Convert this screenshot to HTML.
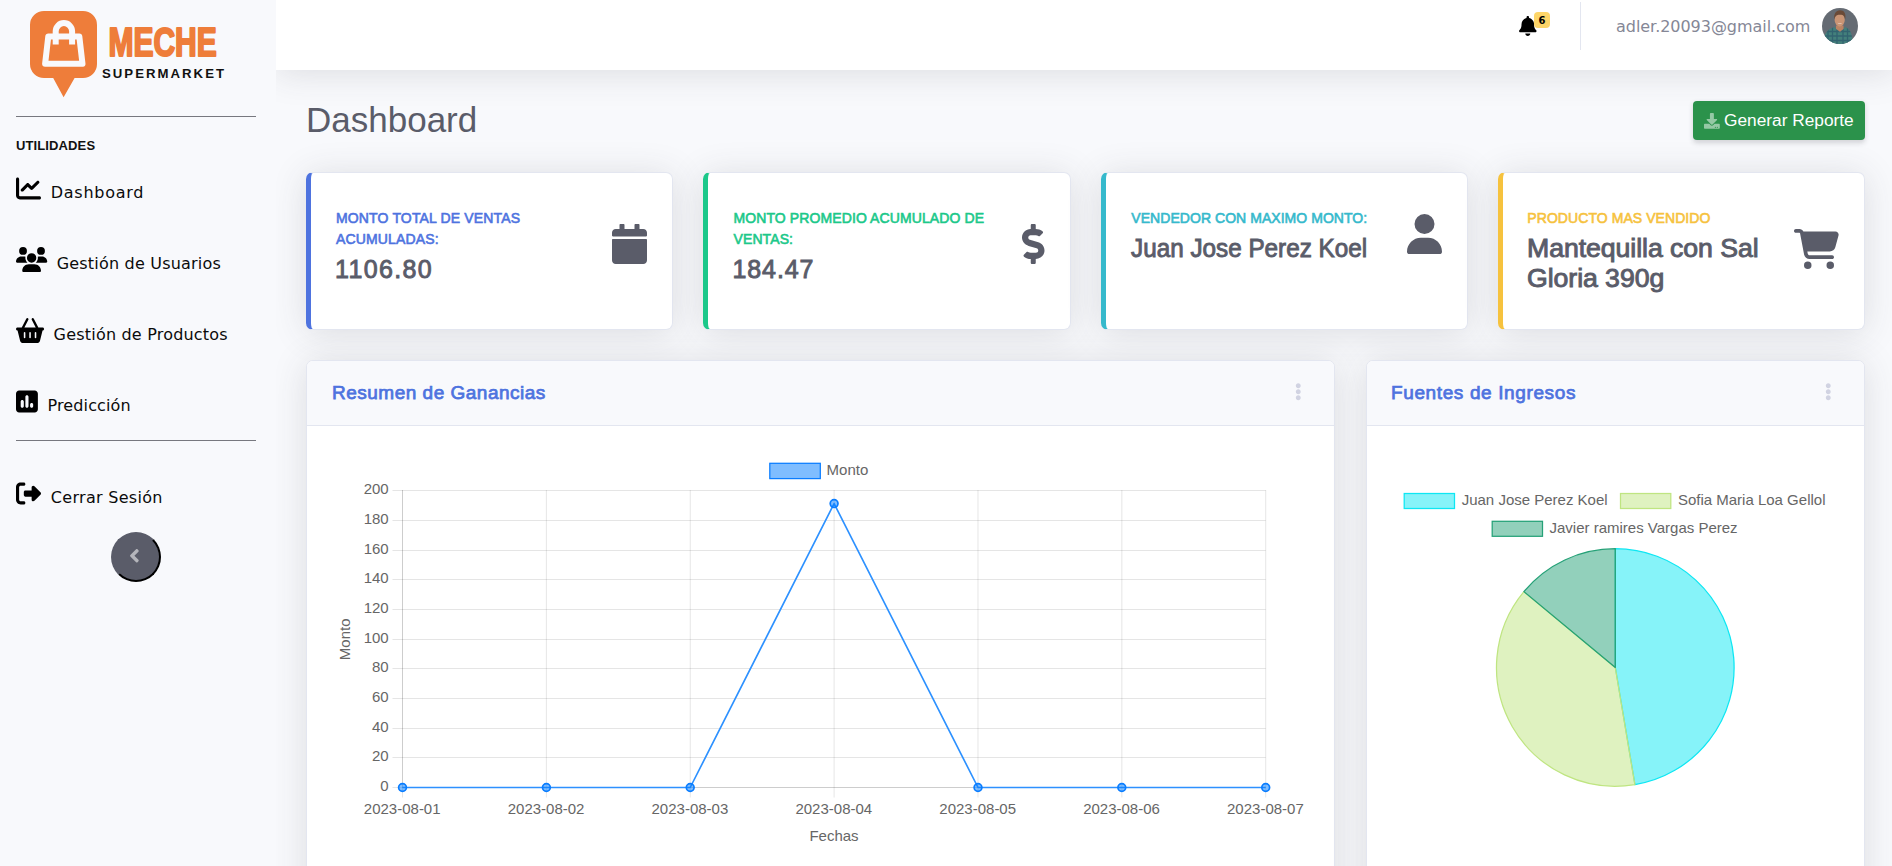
<!DOCTYPE html>
<html lang="es">
<head>
<meta charset="utf-8">
<title>Meche Supermarket - Dashboard</title>
<style>
*{box-sizing:border-box}
html,body{margin:0;padding:0}
body{width:1892px;height:866px;overflow:hidden;position:relative;background:#f8f9fc;font-family:"Liberation Sans",sans-serif;color:#5a5c69}
.abs{position:absolute}
svg{display:block;overflow:visible}
/* sidebar */
#sidebar{position:absolute;left:0;top:0;width:276px;height:866px;background:#f8f9fc;z-index:3}
#sidebar hr{position:absolute;left:16px;width:240px;height:1px;border:0;margin:0;background:#77787f}
#sidebar .heading{position:absolute;left:16px;top:136px;font-weight:700;font-size:13px;line-height:20px;color:#111;letter-spacing:.12px}
#sidebar ul{list-style:none;margin:0;padding:0}
#sidebar li{position:absolute;left:16px;height:30px}
#sidebar li svg{position:absolute;left:0;top:0;fill:#000}
#sidebar li span{position:absolute;white-space:nowrap;font-family:"DejaVu Sans","Liberation Sans",sans-serif;font-size:16px;line-height:20px;color:#0b0b0b;letter-spacing:.2px}
#toggle{position:absolute;left:111px;top:532px;width:50px;height:50px;border-radius:50%;background:#5a5c69;border:2px solid;border-color:#5a5c69 #000 #000 #5a5c69;padding:0}
#toggle svg{position:absolute;left:16.4px;top:11.3px;fill:rgba(255,255,255,.55)}
/* topbar */
#wrap{position:absolute;left:276px;top:0;width:1616px;height:866px;overflow:hidden}
#topbar{position:absolute;left:0;top:0;width:1618px;height:70px;background:#fff;box-shadow:0 3px 35px 0 rgba(58,59,69,.15);z-index:2}
#topbar .divider{position:absolute;left:1304px;top:2px;width:1px;height:48px;background:#e3e6f0}
#topbar .badge{position:absolute;left:1258px;top:12px;width:16px;height:16px;border-radius:4px;background:#fdd568;color:#000;font-family:"DejaVu Sans","Liberation Sans",sans-serif;font-weight:700;font-size:10px;line-height:17.5px;text-align:center}
#topbar .email{position:absolute;left:1340px;top:16.8px;letter-spacing:-.04px;font-family:"DejaVu Sans","Liberation Sans",sans-serif;font-size:16px;line-height:20px;color:#858796;white-space:nowrap}
/* content */
h1{position:absolute;margin:0;font-weight:400;font-size:35px;line-height:40px;color:#5a5c69;left:30px;top:100px;white-space:nowrap}
#btn{position:absolute;left:1417px;top:101px;width:172px;height:39px;border-radius:4px;background:#2b924b;box-shadow:0 2.5px 5px 0 rgba(58,59,69,.2);color:#fff;font-size:17.3px;line-height:20px}
#btn span{position:absolute;left:31px;top:9px;white-space:nowrap}
#btn svg{position:absolute;left:10.5px;top:11.5px;fill:rgba(255,255,255,.5)}
.card{position:absolute;background:#fff;border:1px solid #e3e6f0;border-radius:7px;box-shadow:0 3px 35px 0 rgba(58,59,69,.15)}
.stat{top:172px;width:367px;height:158px;border-left-width:5px;border-left-style:solid}
.stat .lbl{position:absolute;left:25.5px;top:35px;font-size:14px;font-weight:400;-webkit-text-stroke:.6px currentColor;line-height:21px;text-transform:uppercase;white-space:nowrap}
.stat .val{position:absolute;left:26px;font-size:25px;font-weight:400;-webkit-text-stroke:.9px currentColor;line-height:30px;color:#5a5c69;white-space:nowrap}
.stat svg{position:absolute;fill:#5a5c69}
.big .hd{position:absolute;left:0;top:0;right:0;height:65px;background:#f8f9fc;border-bottom:1px solid #e3e6f0;border-radius:6px 6px 0 0}
.big .hd h6{position:absolute;left:25px;top:20px;margin:0;font-size:19px;font-weight:400;-webkit-text-stroke:.75px currentColor;line-height:24px;color:#4e73df;white-space:nowrap}
.big .hd svg{position:absolute;fill:#d1d3e2}
</style>
</head>
<body>
<nav id="sidebar">
<a id="logo" style="position:absolute;left:0;top:0;width:276px;height:110px;display:block">
<svg width="276" height="110" viewBox="0 0 276 110">
<path fill="#ee7d3a" d="M44 11H83a14 14 0 0 1 14 14V64a14 14 0 0 1 -14 14H74.600L63.600 97.300 53.200 78H44a14 14 0 0 1 -14 -14V25a14 14 0 0 1 14 -14z"/>
<path fill="none" stroke="#f8f9fc" stroke-width="6" d="M55.700 44.500V31.300a8.200 8.200 0 0 1 16.400 0V44.500"/>
<path fill="none" stroke="#f8f9fc" stroke-width="6" stroke-linejoin="round" d="M48.300 36.400H79.300L82.500 63.800H45.100z"/>
<text x="108.400" y="55.500" font-family="Liberation Sans, sans-serif" font-weight="700" font-size="40" fill="#ee7d3a" stroke="#ee7d3a" stroke-width="2.100" stroke-linejoin="round" textLength="108.400" lengthAdjust="spacingAndGlyphs">MECHE</text>
<text x="102" y="78.200" font-family="Liberation Sans, sans-serif" font-weight="700" font-size="13.200" fill="#111" textLength="122" lengthAdjust="spacing">SUPERMARKET</text>
</svg></a>
<hr style="top:116px">
<div class="heading">UTILIDADES</div>
<ul>
<li style="top:176.0px"><svg width="25.00" height="25" viewBox="0 0 512 512"><path d="M64 64c0-17.700-14.300-32-32-32S0 46.300 0 64V400c0 44.200 35.800 80 80 80H480c17.700 0 32-14.300 32-32s-14.300-32-32-32H80c-8.800 0-16-7.200-16-16V64zm406.600 86.600c12.500-12.500 12.500-32.800 0-45.300s-32.800-12.500-45.300 0L320 210.700l-57.400-57.400c-12.500-12.500-32.800-12.500-45.300 0l-112 112c-12.500 12.500-12.500 32.800 0 45.300s32.800 12.500 45.300 0L240 221.300l57.400 57.400c12.500 12.500 32.800 12.500 45.300 0l128-128z"/></svg><span style="left:34.8px;top:7.0px;letter-spacing:0.72px">Dashboard</span></li>
<li style="top:247.4px"><svg width="31.25" height="25" viewBox="0 0 640 512"><path d="M144 0a80 80 0 1 1 0 160A80 80 0 1 1 144 0zM512 0a80 80 0 1 1 0 160A80 80 0 1 1 512 0zM0 298.700C0 239.800 47.800 192 106.700 192h42.700c15.900 0 31 3.500 44.600 9.700c-1.300 7.200-1.900 14.700-1.900 22.300c0 38.200 16.800 72.500 43.300 96c-.2 0-.4 0-.7 0H21.300C9.600 320 0 310.400 0 298.700zM405.300 320c-.2 0-.4 0-.7 0c26.600-23.500 43.300-57.800 43.300-96c0-7.600-.7-15-1.900-22.300c13.600-6.300 28.700-9.700 44.600-9.700h42.700C592.200 192 640 239.800 640 298.700c0 11.800-9.600 21.300-21.300 21.300H405.300zM224 224a96 96 0 1 1 192 0 96 96 0 1 1 -192 0zM128 485.300C128 411.700 187.700 352 261.300 352H378.700C452.300 352 512 411.700 512 485.300c0 14.700-11.900 26.700-26.700 26.700H154.700c-14.700 0-26.700-11.900-26.700-26.700z"/></svg><span style="left:40.7px;top:6.9px;letter-spacing:0.2px">Gestión de Usuarios</span></li>
<li style="top:318.0px"><svg width="28.12" height="25" viewBox="0 0 576 512"><path d="M253.300 35.100c6.100-11.800 1.500-26.300-10.200-32.400s-26.300-1.500-32.400 10.200L117.600 192H32c-17.700 0-32 14.300-32 32s14.300 32 32 32L83.900 463.500C91 492 116.600 512 146 512H430c29.400 0 55-20 62.100-48.500L544 256c17.700 0 32-14.300 32-32s-14.300-32-32-32H458.400L365.300 12.900C359.200 1.200 344.700-3.400 332.900 2.700s-16.300 20.600-10.200 32.400L404.300 192H171.700L253.300 35.100zM192 304v96c0 8.800-7.200 16-16 16s-16-7.200-16-16V304c0-8.800 7.200-16 16-16s16 7.200 16 16zm96-16c8.800 0 16 7.200 16 16v96c0 8.800-7.200 16-16 16s-16-7.200-16-16V304c0-8.800 7.200-16 16-16zm128 16v96c0 8.800-7.200 16-16 16s-16-7.200-16-16V304c0-8.800 7.200-16 16-16s16 7.200 16 16z"/></svg><span style="left:37.6px;top:6.6px;letter-spacing:0.2px">Gestión de Productos</span></li>
<li style="top:389.2px"><svg width="21.88" height="25" viewBox="0 0 448 512"><path d="M64 32C28.700 32 0 60.700 0 96V416c0 35.300 28.700 64 64 64H384c35.300 0 64-28.700 64-64V96c0-35.300-28.700-64-64-64H64zm64 192c17.700 0 32 14.300 32 32v96c0 17.700-14.300 32-32 32s-32-14.300-32-32V256c0-17.700 14.300-32 32-32zm64-64c0-17.700 14.300-32 32-32s32 14.300 32 32V352c0 17.700-14.300 32-32 32s-32-14.300-32-32V160zM320 288c17.700 0 32 14.300 32 32v32c0 17.700-14.300 32-32 32s-32-14.300-32-32V320c0-17.700 14.300-32 32-32z"/></svg><span style="left:31.5px;top:7.0px;letter-spacing:0.13px">Predicción</span></li>
<li style="top:481.0px"><svg width="25.00" height="25" viewBox="0 0 512 512"><path d="M377.900 105.900L500.700 228.700c7.200 7.200 11.300 17.100 11.300 27.300s-4.100 20.100-11.300 27.300L377.900 406.100c-6.400 6.400-15 9.900-24 9.900c-18.700 0-33.900-15.200-33.900-33.900l0-62.100-128 0c-17.700 0-32-14.300-32-32l0-64c0-17.700 14.300-32 32-32l128 0 0-62.100c0-18.700 15.200-33.900 33.900-33.900c9 0 17.600 3.600 24 9.900zM160 96L96 96c-17.700 0-32 14.300-32 32l0 256c0 17.700 14.300 32 32 32l64 0c17.700 0 32 14.300 32 32s-14.300 32-32 32l-64 0c-53 0-96-43-96-96L0 128C0 75 43 32 96 32l64 0c17.700 0 32 14.300 32 32s-14.300 32-32 32z"/></svg><span style="left:34.8px;top:7.2px;letter-spacing:0.3px">Cerrar Sesión</span></li>

</ul>
<hr style="top:440px">
<button id="toggle" aria-label="toggle"><svg width="10.800" height="21.600" viewBox="0 0 256 512"><path d="M31.700 239l136-136c9.400-9.400 24.600-9.400 33.900 0l22.600 22.600c9.400 9.400 9.400 24.600 0 33.900L127.900 256l96.400 96.400c9.400 9.400 9.400 24.600 0 33.900L201.700 409c-9.400 9.400-24.600 9.400-33.900 0l-136-136c-9.500-9.400-9.500-24.600-.1-34z"/></svg></button>
</nav>
<div id="wrap">
<header id="topbar">
<svg class="abs" style="left:1242.800px;top:15.600px;fill:#000" width="17.600" height="20.100" viewBox="0 0 448 512"><path d="M224 512c35.320 0 63.970-28.650 63.970-64H160.030c0 35.350 28.650 64 63.970 64zm215.390-149.710c-19.320-20.760-55.470-51.990-55.470-154.290 0-77.700-54.480-139.900-127.940-155.160V32c0-17.670-14.320-32-31.980-32s-31.980 14.330-31.980 32v20.840C118.560 68.100 64.080 130.300 64.080 208c0 102.300-36.150 133.530-55.470 154.290-6 6.450-8.660 14.160-8.610 21.710.110 16.400 12.980 32 32.100 32h383.800c19.120 0 32-15.600 32.100-32 .050-7.550-2.610-15.270-8.610-21.710z"/></svg>
<span class="badge">6</span>
<div class="divider"></div>
<span class="email">adler.20093@gmail.com</span>
<svg class="abs" style="left:1546px;top:7.800px" width="36" height="36" viewBox="0 0 36 36">
<defs><clipPath id="av"><circle cx="18" cy="18" r="18"/></clipPath></defs>
<g clip-path="url(#av)">
<rect width="36" height="36" fill="#656b73"/>
<path id="sh" d="M1.500 36C1.500 26 5 21.500 12.500 19L18 24.500 23 19C28.500 21 30.500 26 30.500 36z" fill="#44807c"/>
<clipPath id="shc"><use href="#sh"/></clipPath>
<path clip-path="url(#shc)" d="M0 23.500H36M0 28H36M0 32.500H36M6 18V36M10.500 18V36M15 18V36M21 18V36M25.500 18V36" stroke="#27506a" stroke-width="1.300" opacity=".6"/>
<path d="M14 17.500h7.500v3.500L18 23.500 14 21z" fill="#b98464"/>
<ellipse cx="17.700" cy="11.800" rx="5.100" ry="6.600" fill="#c99474"/>
<path d="M12.300 11.500C11.500 6 14 2.200 18 2.200c4.200 0 6.300 3.300 5.200 9.300C22.500 7.500 21 6.500 17.500 6.700 14.500 6.800 13 8 12.300 11.500z" fill="#6a4a37"/>
<path d="M15.300 14.800q2.500 1.600 5 0q-2.500 2.600-5 0z" fill="#f4ece6"/>
</g></svg>
</header>
<main>
<h1>Dashboard</h1>
<a id="btn"><svg width="15.800" height="15.800" viewBox="0 0 512 512"><path d="M216 0h80c13.300 0 24 10.700 24 24v168h87.700c17.800 0 26.700 21.500 14.100 34.100L269.700 378.300c-7.500 7.500-19.800 7.500-27.300 0L90.100 226.100c-12.600-12.600-3.700-34.100 14.100-34.100H192V24c0-13.300 10.700-24 24-24zm296 376v112c0 13.300-10.700 24-24 24H24c-13.300 0-24-10.700-24-24V376c0-13.300 10.700-24 24-24h146.700l49 49c20.100 20.100 52.500 20.100 72.600 0l49-49H488c13.300 0 24 10.700 24 24zm-124 88c0-11-9-20-20-20s-20 9-20 20 9 20 20 20 20-9 20-20zm64 0c0-11-9-20-20-20s-20 9-20 20 9 20 20 20 20-9 20-20z"/></svg><span>Generar Reporte</span></a>
<section class="card stat" style="left:30px;border-left-color:#4e73df">
<div class="lbl" style="color:#4e73df;left:25px;letter-spacing:.15px">Monto total de ventas<br>acumuladas:</div>
<div class="val" style="top:80.6px;left:24px;letter-spacing:1.35px">1106.80</div>
<svg style="left:301.300px;top:50.9px" width="35" height="40" viewBox="0 0 448 512"><path d="M12 192h424c6.600 0 12 5.400 12 12v260c0 26.500-21.500 48-48 48H48c-26.500 0-48-21.500-48-48V204c0-6.600 5.400-12 12-12zm436-44v-36c0-26.500-21.500-48-48-48h-48V12c0-6.600-5.400-12-12-12h-40c-6.600 0-12 5.400-12 12v52H160V12c0-6.600-5.400-12-12-12h-40c-6.600 0-12 5.400-12 12v52H48C21.500 64 0 85.500 0 112v36c0 6.600 5.400 12 12 12h424c6.600 0 12-5.400 12-12z"/></svg>
</section>
<section class="card stat" style="left:427px;width:368px;border-left-color:#1cc88a">
<div class="lbl" style="color:#1cc88a;letter-spacing:.1px">Monto promedio acumulado de<br>ventas:</div>
<div class="val" style="top:80.6px;left:24.5px;letter-spacing:.9px">184.47</div>
<svg style="left:314.3px;top:50.9px" width="22.500" height="40" viewBox="0 0 288 512"><path d="M209.200 233.400l-108-31.600C88.700 198.200 80 186.500 80 173.500c0-16.300 13.200-29.500 29.500-29.500h66.300c12.200 0 24.200 3.700 34.200 10.500 6.100 4.100 14.300 3.100 19.500-2l34.800-34c7.100-6.900 6.100-18.400-1.800-24.500C238 74.800 207.400 64.100 176 64V16c0-8.800-7.200-16-16-16h-32c-8.800 0-16 7.200-16 16v48h-2.500C45.800 64-5.400 118.700.5 183.600c4.200 46.100 39.400 83.600 83.800 96.600l102.500 30c12.500 3.700 21.200 15.300 21.200 28.300 0 16.300-13.200 29.500-29.500 29.500h-66.300C100 368 88 364.300 78 357.500c-6.100-4.100-14.300-3.100-19.500 2l-34.800 34c-7.100 6.900-6.100 18.400 1.800 24.500 24.500 19.200 55.100 29.900 86.500 30v48c0 8.800 7.200 16 16 16h32c8.800 0 16-7.200 16-16v-48.200c46.600-.9 90.300-28.600 105.700-72.700 21.500-61.600-14.600-124.800-72.500-141.700z"/></svg>
</section>
<section class="card stat" style="left:825px;border-left-color:#36b9cc">
<div class="lbl" style="color:#36b9cc;left:25.3px;letter-spacing:.05px">Vendedor con maximo monto:</div>
<div class="val" style="top:59.6px;left:25px;transform:scaleX(.971);transform-origin:0 0">Juan Jose Perez Koel</div>
<svg style="left:300.8px;top:41.4px" width="35" height="40" viewBox="0 0 448 512"><path d="M224 256A128 128 0 1 0 224 0a128 128 0 1 0 0 256zm-45.700 48C79.800 304 0 383.800 0 482.300C0 498.700 13.300 512 29.700 512H418.300c16.400 0 29.700-13.300 29.700-29.700C448 383.800 368.200 304 269.700 304H178.300z"/></svg>
</section>
<section class="card stat" style="left:1222px;border-left-color:#f6c23e">
<div class="lbl" style="color:#f6c23e;left:24.3px;letter-spacing:.07px">Producto mas vendido</div>
<div class="val" style="top:59.6px;left:24.3px;letter-spacing:-.05px;transform:scaleX(1.066);transform-origin:0 0">Mantequilla con Sal<br>Gloria 390g</div>
<svg style="left:291.4px;top:55.5px" width="45" height="40" viewBox="0 0 576 512"><path d="M0 24C0 10.700 10.700 0 24 0H69.500c22 0 41.500 12.800 50.600 32h411c26.300 0 45.500 25 38.600 50.400l-41 152.300c-8.500 31.400-37 53.300-69.500 53.300H170.700l5.400 28.500c2.200 11.300 12.100 19.500 23.600 19.500H488c13.300 0 24 10.700 24 24s-10.700 24-24 24H199.700c-34.600 0-64.300-24.600-70.700-58.500L77.400 54.500c-.7-3.800-4-6.500-7.900-6.500H24C10.700 48 0 37.300 0 24zM128 464a48 48 0 1 1 96 0 48 48 0 1 1 -96 0zm336-48a48 48 0 1 1 0 96 48 48 0 1 1 0-96z"/></svg>
</section>
<section class="card big" style="left:30px;top:360px;width:1029px;height:560px">
<div class="hd"><h6 style="letter-spacing:.5px">Resumen de Ganancias</h6><svg style="left:988.2px;top:21.6px" width="6.560" height="17.500" viewBox="0 0 192 512"><path d="M96 184c39.800 0 72 32.200 72 72s-32.200 72-72 72-72-32.200-72-72 32.200-72 72-72zM24 80c0 39.800 32.200 72 72 72s72-32.200 72-72S135.800 8 96 8 24 40.200 24 80zm0 352c0 39.800 32.200 72 72 72s72-32.200 72-72-32.200-72-72-72-72 32.200-72 72z"/></svg></div>
<svg class="abs" style="left:-1px;top:-1px" width="1029" height="506" viewBox="306 360 1029 506">
<path d="M392.5 787.5H1265.7M392.5 757.5H1265.7M392.5 728.5H1265.7M392.5 698.5H1265.7M392.5 668.5H1265.7M392.5 639.5H1265.7M392.5 609.5H1265.7M392.5 579.5H1265.7M392.5 550.5H1265.7M392.5 520.5H1265.7M392.5 490.5H1265.7M402.50 490V797.5M546.37 490V797.5M690.24 490V797.5M834.11 490V797.5M977.98 490V797.5M1121.85 490V797.5M1265.72 490V797.5" stroke="rgba(0,0,0,.1)" stroke-width="1" fill="none"/>
<path d="M402.5 490V788M402 787.5H1265.7" stroke="rgba(0,0,0,.1)" stroke-width="1" fill="none"/>
<rect x="769.8" y="463.3" width="50.5" height="15.3" fill="rgba(0,123,255,.5)" stroke="#0a7dff" stroke-width="1.25"/>
<text x="826.6" y="474.9" font-family="Liberation Sans, sans-serif" font-size="15" fill="#666">Monto</text>
<text x="388.7" y="791.3" text-anchor="end" font-family="Liberation Sans, sans-serif" font-size="15" fill="#666">0</text>
<text x="388.7" y="761.3" text-anchor="end" font-family="Liberation Sans, sans-serif" font-size="15" fill="#666">20</text>
<text x="388.7" y="732.3" text-anchor="end" font-family="Liberation Sans, sans-serif" font-size="15" fill="#666">40</text>
<text x="388.7" y="702.3" text-anchor="end" font-family="Liberation Sans, sans-serif" font-size="15" fill="#666">60</text>
<text x="388.7" y="672.3" text-anchor="end" font-family="Liberation Sans, sans-serif" font-size="15" fill="#666">80</text>
<text x="388.7" y="643.3" text-anchor="end" font-family="Liberation Sans, sans-serif" font-size="15" fill="#666">100</text>
<text x="388.7" y="613.3" text-anchor="end" font-family="Liberation Sans, sans-serif" font-size="15" fill="#666">120</text>
<text x="388.7" y="583.3" text-anchor="end" font-family="Liberation Sans, sans-serif" font-size="15" fill="#666">140</text>
<text x="388.7" y="554.3" text-anchor="end" font-family="Liberation Sans, sans-serif" font-size="15" fill="#666">160</text>
<text x="388.7" y="524.3" text-anchor="end" font-family="Liberation Sans, sans-serif" font-size="15" fill="#666">180</text>
<text x="388.7" y="494.3" text-anchor="end" font-family="Liberation Sans, sans-serif" font-size="15" fill="#666">200</text>
<text x="402.2" y="814" text-anchor="middle" font-family="Liberation Sans, sans-serif" font-size="15" fill="#666">2023-08-01</text>
<text x="546.1" y="814" text-anchor="middle" font-family="Liberation Sans, sans-serif" font-size="15" fill="#666">2023-08-02</text>
<text x="689.9" y="814" text-anchor="middle" font-family="Liberation Sans, sans-serif" font-size="15" fill="#666">2023-08-03</text>
<text x="833.8" y="814" text-anchor="middle" font-family="Liberation Sans, sans-serif" font-size="15" fill="#666">2023-08-04</text>
<text x="977.7" y="814" text-anchor="middle" font-family="Liberation Sans, sans-serif" font-size="15" fill="#666">2023-08-05</text>
<text x="1121.5" y="814" text-anchor="middle" font-family="Liberation Sans, sans-serif" font-size="15" fill="#666">2023-08-06</text>
<text x="1265.4" y="814" text-anchor="middle" font-family="Liberation Sans, sans-serif" font-size="15" fill="#666">2023-08-07</text>
<text x="834" y="840.9" text-anchor="middle" font-family="Liberation Sans, sans-serif" font-size="15" fill="#666">Fechas</text>
<text transform="translate(349.7 639.3) rotate(-90)" text-anchor="middle" font-family="Liberation Sans, sans-serif" font-size="15" fill="#666">Monto</text>
<polyline points="402.5,787.5 546.4,787.5 690.2,787.5 834.1,503.6 978.0,787.5 1121.8,787.5 1265.7,787.5" fill="none" stroke="#2d91ff" stroke-width="1.65" stroke-linejoin="round"/>
<circle cx="402.5" cy="787.5" r="3.9" fill="rgba(0,123,255,.5)" stroke="#0a7dff" stroke-width="1.7"/>
<circle cx="546.4" cy="787.5" r="3.9" fill="rgba(0,123,255,.5)" stroke="#0a7dff" stroke-width="1.7"/>
<circle cx="690.2" cy="787.5" r="3.9" fill="rgba(0,123,255,.5)" stroke="#0a7dff" stroke-width="1.7"/>
<circle cx="834.1" cy="503.6" r="3.9" fill="rgba(0,123,255,.5)" stroke="#0a7dff" stroke-width="1.7"/>
<circle cx="978.0" cy="787.5" r="3.9" fill="rgba(0,123,255,.5)" stroke="#0a7dff" stroke-width="1.7"/>
<circle cx="1121.8" cy="787.5" r="3.9" fill="rgba(0,123,255,.5)" stroke="#0a7dff" stroke-width="1.7"/>
<circle cx="1265.7" cy="787.5" r="3.9" fill="rgba(0,123,255,.5)" stroke="#0a7dff" stroke-width="1.7"/>
</svg>
</section>
<section class="card big" style="left:1090px;top:360px;width:499px;height:560px">
<div class="hd"><h6 style="letter-spacing:.62px;left:24px">Fuentes de Ingresos</h6><svg style="left:458px;top:21.6px" width="6.560" height="17.500" viewBox="0 0 192 512"><path d="M96 184c39.800 0 72 32.200 72 72s-32.200 72-72 72-72-32.200-72-72 32.200-72 72-72zM24 80c0 39.800 32.200 72 72 72s72-32.200 72-72S135.800 8 96 8 24 40.200 24 80zm0 352c0 39.800 32.200 72 72 72s72-32.200 72-72-32.200-72-72-72-72 32.200-72 72z"/></svg></div>
<svg class="abs" style="left:-1px;top:-1px" width="499" height="506" viewBox="1366 360 499 506">
<path d="M1615.3 667.5L1615.30 548.70A118.8 118.8 0 0 1 1634.91 784.67Z" fill="rgba(13,231,243,.5)" stroke="rgb(13,231,243)" stroke-width="1.25" stroke-linejoin="round"/>
<path d="M1615.3 667.5L1634.91 784.67A118.8 118.8 0 0 1 1523.90 591.61Z" fill="rgba(191,229,129,.5)" stroke="rgb(191,229,129)" stroke-width="1.25" stroke-linejoin="round"/>
<path d="M1615.3 667.5L1523.90 591.61A118.8 118.8 0 0 1 1615.30 548.70Z" fill="rgba(37,161,119,.5)" stroke="rgb(37,161,119)" stroke-width="1.25" stroke-linejoin="round"/>
<rect x="1404.2" y="493.5" width="50.3" height="15" fill="rgba(13,231,243,.5)" stroke="rgb(13,231,243)" stroke-width="1.25"/><text x="1461.7" y="504.7" font-family="Liberation Sans, sans-serif" font-size="15" fill="#666">Juan Jose Perez Koel</text>
<rect x="1620.5" y="493.5" width="50.3" height="15" fill="rgba(191,229,129,.5)" stroke="rgb(191,229,129)" stroke-width="1.25"/><text x="1677.9" y="504.7" font-family="Liberation Sans, sans-serif" font-size="15" fill="#666">Sofia Maria Loa Gellol</text>
<rect x="1492.2" y="521.3" width="50.3" height="15" fill="rgba(37,161,119,.5)" stroke="rgb(37,161,119)" stroke-width="1.25"/><text x="1549.5" y="532.6" font-family="Liberation Sans, sans-serif" font-size="15" fill="#666">Javier ramires Vargas Perez</text>
</svg>
</section>
</main>
</div>
</body>
</html>
